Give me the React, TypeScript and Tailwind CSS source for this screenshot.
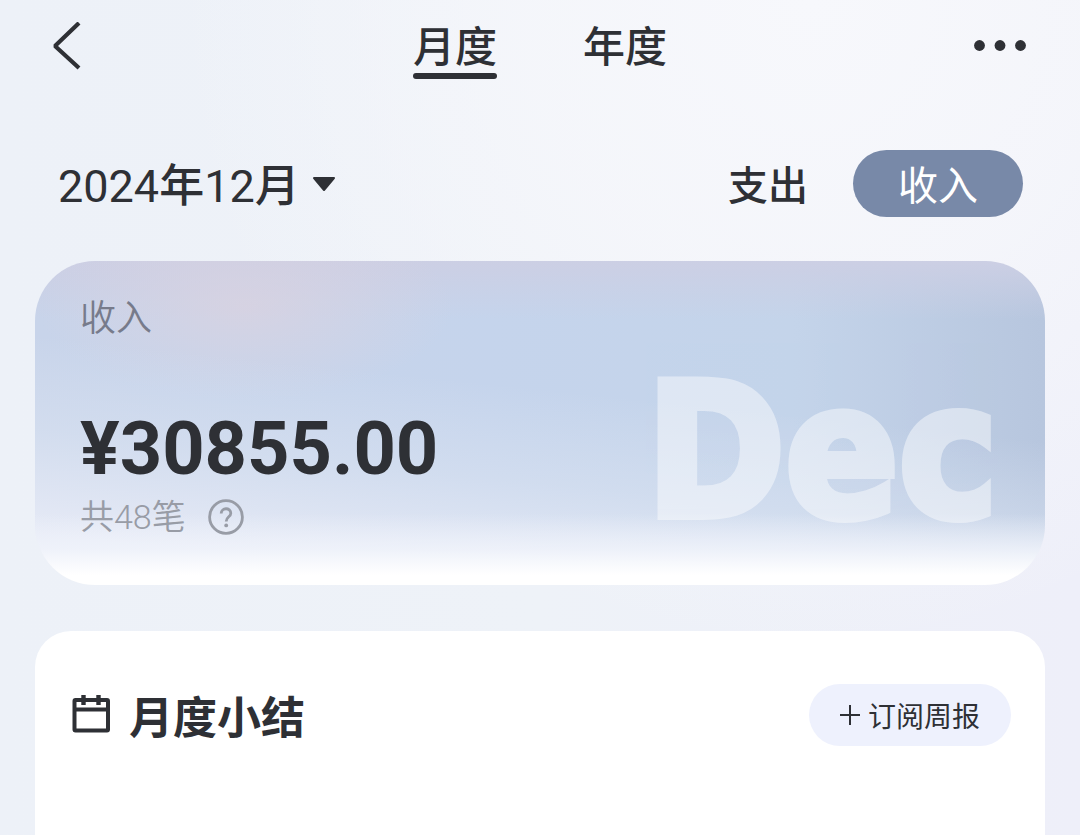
import React, { useState } from 'react';

function BackIcon() {
  return (
    <svg className="w-8 h-12" viewBox="0 0 32 48" fill="none" stroke="currentColor" strokeWidth="4.2" strokeLinejoin="bevel">
      <path d="M29 1 L5 24 L29 46" />
    </svg>
  );
}

function MoreIcon() {
  return (
    <svg className="w-14 h-12" viewBox="0 0 56 48" fill="currentColor">
      <circle cx="5.5" cy="23.5" r="5.4" />
      <circle cx="26" cy="23.5" r="5.4" />
      <circle cx="46.5" cy="23.5" r="5.4" />
    </svg>
  );
}

function CalendarIcon() {
  return (
    <svg className="w-10 h-10" viewBox="0 0 40 40" fill="none" stroke="currentColor" strokeWidth="4">
      <rect x="3.5" y="5" width="33.5" height="30.5" rx="1" />
      <path d="M3.5 14.5 H37" strokeWidth="4" />
      <path d="M12.5 0 V10 M27.5 0 V10" strokeWidth="4.4" />
    </svg>
  );
}

function HelpIcon() {
  return (
    <svg className="w-9 h-9" viewBox="0 0 36 36" fill="none" stroke="currentColor" strokeWidth="2.8">
      <circle cx="18" cy="18" r="16.4" />
      <path d="M13.2 14.5 C13.2 8.2 22.8 8.2 22.8 14.2 C22.8 17.8 18.2 17.8 18.2 22.4" strokeWidth="2.8" />
      <circle cx="18.2" cy="26.4" r="1.9" fill="currentColor" stroke="none" />
    </svg>
  );
}

const tabs = ['月度', '年度'];

function App() {
  const [tab, setTab] = useState('月度');
  const [kind, setKind] = useState('收入');

  return (
    <div className="min-h-screen flex flex-col text-[#2e3035] font-[Roboto,'Noto_Sans_CJK_SC',sans-serif] bg-[radial-gradient(ellipse_at_75%_0%,#f7f8fc_0%,#f6f7fbcc_25%,transparent_55%),linear-gradient(to_right,#edf1f8,#eef2f8_50%,#eeeff9)]">
      <header className="flex justify-between items-start px-[50px]">
        <button aria-label="返回" className="w-14 pt-[22px]">
          <BackIcon />
        </button>
        <nav className="flex gap-[86px]">
          {tabs.map((name) => (
            <button key={name} onClick={() => setTab(name)} className="h-[92px] pt-6 flex flex-col items-center">
              <span className="text-[42px] leading-[48px] font-medium">{name}</span>
              <span className={`w-full h-1.5 mt-px rounded-full ${tab === name ? 'bg-[#2e3035]' : ''}`} />
            </button>
          ))}
        </nav>
        <button aria-label="更多" className="w-14 pt-[22px]">
          <MoreIcon />
        </button>
      </header>

      <div className="flex justify-between items-center pl-[58px] pr-[57px] mt-[58px]">
        <button className="flex items-center gap-3 text-[45px] font-medium">
          <span className="pt-1.5 leading-[61px]"><span className="font-normal">2024</span>年<span className="font-normal">12</span>月</span>
          <svg className="w-6 h-4" viewBox="0 0 24 16" fill="currentColor" stroke="currentColor" strokeWidth="2" strokeLinejoin="round">
            <path d="M2 2 H22 L12 14 Z" />
          </svg>
        </button>
        <div className="flex">
          {['支出', '收入'].map((name) => (
            <button
              key={name}
              onClick={() => setKind(name)}
              className={`w-[170px] h-[67px] pt-1.5 rounded-full text-[40px] leading-[61px] ${kind === name ? 'bg-[#7889a8] text-white' : 'font-medium'}`}>
              {name}
            </button>
          ))}
        </div>
      </div>

      <main className="flex-1 flex flex-col px-[35px] mt-11">
        <section className="relative overflow-hidden rounded-[60px] px-[45px] pt-[34px] pb-11 bg-[linear-gradient(to_bottom,transparent_78%,#f1f4fbcc_89%,#ffffff_97%),linear-gradient(186deg,transparent_42%,#d9e2f199_64%,#e6eaf6_88%),radial-gradient(ellipse_at_center,#dcd2dfb3_0%,transparent_70%),linear-gradient(to_bottom,#cccfe4,transparent_18%),linear-gradient(to_right,#c8d4ea,#c5d4ec_45%,#c4d4ea_75%,#b7c6de)] bg-[size:auto,auto,420px_190px,auto,auto] bg-[position:0_0,0_0,0_-50px,0_0,0_0] bg-no-repeat">
          <span aria-hidden="true" className="absolute right-[47px] bottom-[23px] text-[186px] leading-[220px] font-bold text-white opacity-45 [-webkit-text-stroke:8px_white] font-['DejaVu_Sans_Condensed','DejaVu_Sans',sans-serif]">
            Dec
          </span>
          <h2 className="text-4xl leading-[48px] font-[350] text-[#777b8b]">收入</h2>
          <p className="text-[74px] leading-[72px] font-bold mt-[70px]">¥30855.00</p>
          <div className="flex items-center gap-[22px] mt-2 text-[#989ca6]">
            <span className="text-[34px] leading-[48px] font-[350]">共48笔</span>
            <button aria-label="说明">
              <HelpIcon />
            </button>
          </div>
        </section>

        <section className="flex-1 bg-white rounded-t-[36px] mt-[46px] pl-9 pr-[34px] pt-[53px]">
          <div className="flex justify-between items-center">
            <div className="flex items-center gap-[18px]">
              <CalendarIcon />
              <h2 className="pt-2 text-[44px] leading-[54px] font-bold">月度小结</h2>
            </div>
            <button className="flex items-center justify-center gap-2 w-[202px] h-[62px] rounded-full bg-[#eef1fd] text-[28px]">
              <svg className="w-5 h-5" viewBox="0 0 20 20" stroke="currentColor" strokeWidth="2">
                <path d="M10 0 V20 M0 10 H20" />
              </svg>
              <span className="pt-1.5 leading-[56px]">订阅周报</span>
            </button>
          </div>
        </section>
      </main>
    </div>
  );
}

export default App;
